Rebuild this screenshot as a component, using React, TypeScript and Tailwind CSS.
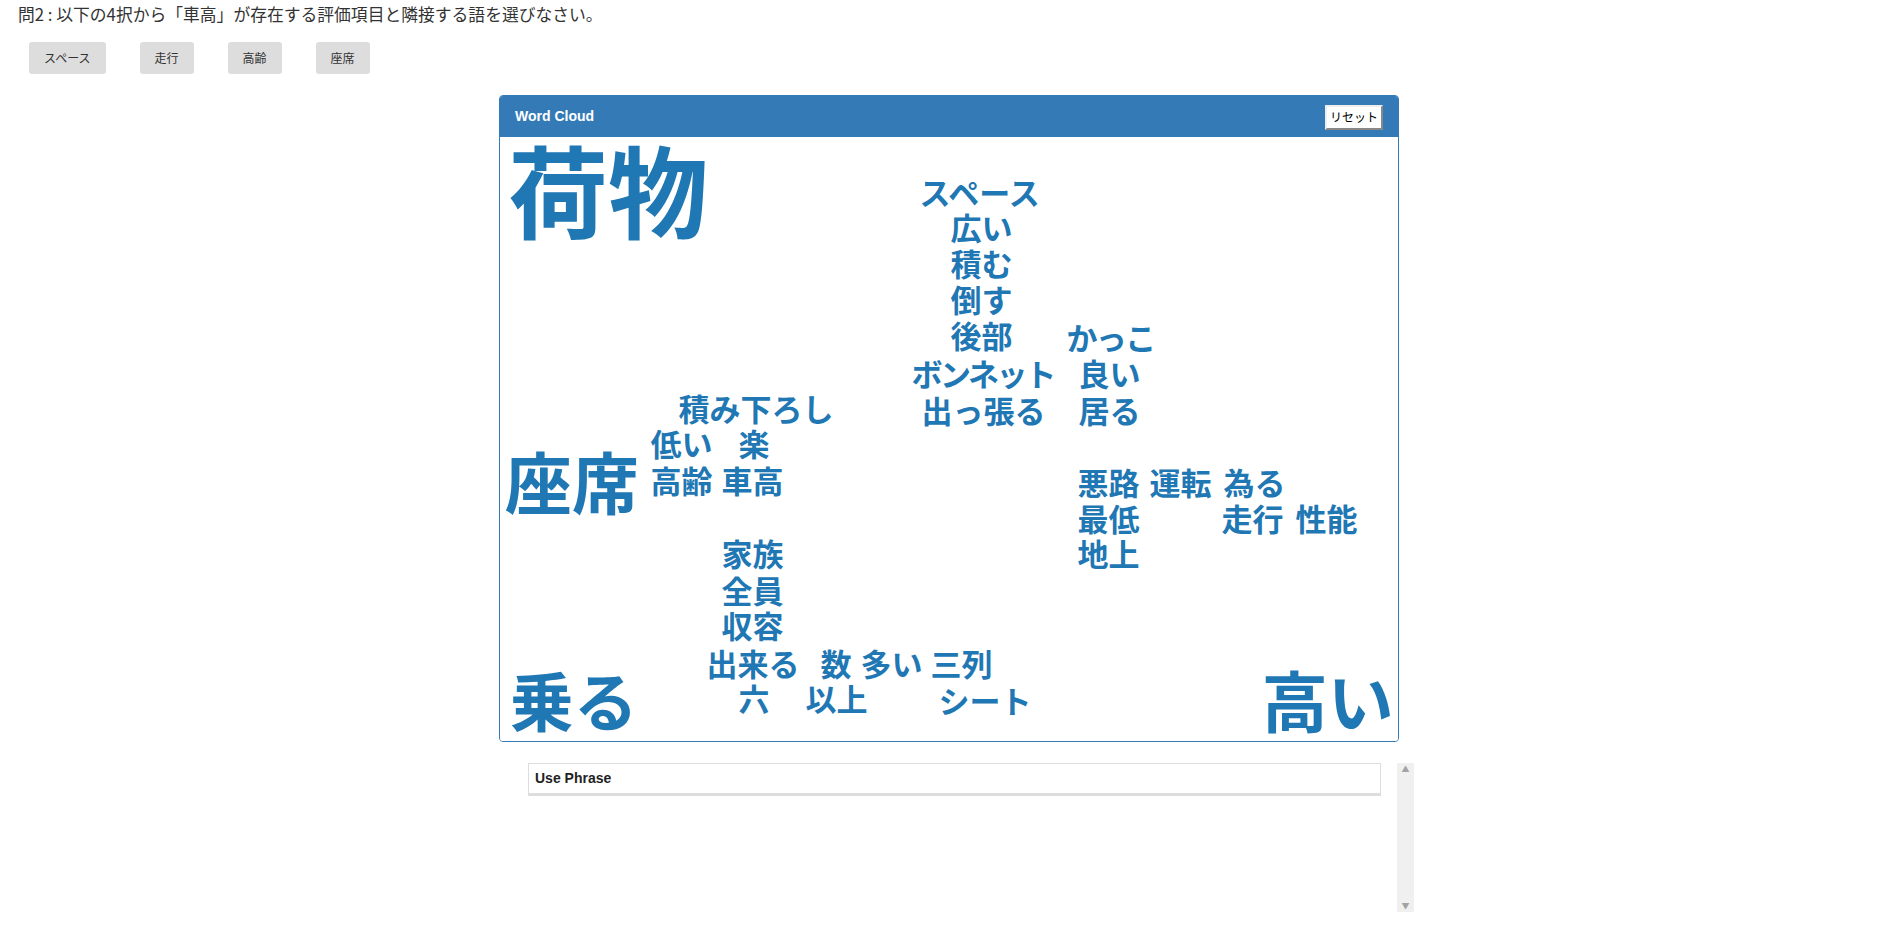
import React from "react";

type W = { t: string; x: number; y: number; s?: number; ls?: number };

const words: W[] = [
  { t: "荷物", x: 513, y: 149, s: 100 },
  { t: "スペース", x: 921, y: 182 },
  { t: "広い", x: 952, y: 217 },
  { t: "積む", x: 952, y: 253 },
  { t: "倒す", x: 952, y: 289 },
  { t: "後部", x: 952, y: 325 },
  { t: "かっこ", x: 1068, y: 327, ls: -1.6 },
  { t: "ボンネット", x: 913, y: 363, ls: -2.4 },
  { t: "良い", x: 1080, y: 363 },
  { t: "出っ張る", x: 923, y: 400 },
  { t: "居る", x: 1080, y: 400 },
  { t: "積み下ろし", x: 680, y: 398 },
  { t: "低い", x: 652, y: 433 },
  { t: "楽", x: 740, y: 433 },
  { t: "座席", x: 508, y: 453, s: 67 },
  { t: "高齢", x: 652, y: 470 },
  { t: "車高", x: 723, y: 470 },
  { t: "悪路", x: 1079, y: 472 },
  { t: "運転", x: 1151, y: 472 },
  { t: "為る", x: 1225, y: 472 },
  { t: "最低", x: 1079, y: 508 },
  { t: "走行", x: 1223, y: 508 },
  { t: "性能", x: 1297, y: 508 },
  { t: "地上", x: 1079, y: 543 },
  { t: "家族", x: 723, y: 543 },
  { t: "全員", x: 723, y: 580 },
  { t: "収容", x: 723, y: 615 },
  { t: "出来る", x: 708, y: 653 },
  { t: "数", x: 822, y: 653 },
  { t: "多い", x: 862, y: 653 },
  { t: "三列", x: 932, y: 653 },
  { t: "六", x: 740, y: 688 },
  { t: "以上", x: 807, y: 688 },
  { t: "シート", x: 940, y: 690 },
  { t: "乗る", x: 513, y: 673, s: 64 },
  { t: "高い", x: 1265, y: 672, s: 66 },
];

const FONT = "font-['Noto_Sans_CJK_JP','Noto_Sans',sans-serif]";

export default function App() {
  const choices = ["スペース", "走行", "高齢", "座席"];
  return (
    <div className={`w-[1879px] h-[928px] bg-white text-[#333] ${FONT} overflow-hidden`}>
      <div className="pl-[18px] pt-[3px] text-[16.8px] leading-[23px]">
        問2 : 以下の4択から「車高」が存在する評価項目と隣接する語を選びなさい。
      </div>
      <div className="flex gap-[34px] pl-[29px] pt-[16px]">
        {choices.map((c) => (
          <div
            key={c}
            className="h-[32px] px-[15px] flex items-center rounded-[3px] bg-[#dddddd] text-[12px] text-[#333]"
          >
            {c}
          </div>
        ))}
      </div>
      <div className="pl-[499px] pt-[21px]">
        <div className="w-[900px] h-[647px] border border-[#337ab7] rounded-[4px] flex flex-col overflow-hidden">
          <div className="h-[41px] bg-[#337ab7] flex items-center justify-between pl-[15px] pr-[15px]">
            <span className="text-white text-[14px] font-bold font-['Liberation_Sans',sans-serif]">
              Word Cloud
            </span>
            <span className="mt-[1px] h-[25px] px-[3px] bg-white border-2 border-t-[#eee] border-l-[#eee] border-r-[#888] border-b-[#888] text-black text-[12px] flex items-center">
              リセット
            </span>
          </div>
          <div className="relative flex-1 bg-white">
            {words.map((w, i) => {
              const s = w.s ?? 31;
              const up = w.s ? 0 : 3;
              return (
                <span
                  key={i}
                  className="absolute whitespace-nowrap font-bold leading-none text-[#1f77b4]"
                  style={{
                    left: w.x - 500 - 0.05 * s,
                    top: w.y - 137 - 0.11 * s - up,
                    fontSize: s,
                    letterSpacing: w.ls ?? 0,
                  }}
                >
                  {w.t}
                </span>
              );
            })}
          </div>
        </div>
      </div>
      <div className="pl-[500px] pt-[21px] flex">
        <div className="w-[897px] h-[149px] pl-[28px] pr-[16px]">
          <div className="h-[33px] border border-[#ddd] border-b-[3px] border-b-[#ddd] flex items-center pl-[6px] text-[14px] font-bold text-[#222] font-['Liberation_Sans',sans-serif]">
            Use Phrase
          </div>
        </div>
        <div className="w-[17px] h-[149px] bg-[#f0f0f0] flex flex-col items-center justify-between py-[2px] text-[8px] text-[#a3a3a3] leading-none">
          <span>▲</span>
          <span>▼</span>
        </div>
      </div>
    </div>
  );
}
